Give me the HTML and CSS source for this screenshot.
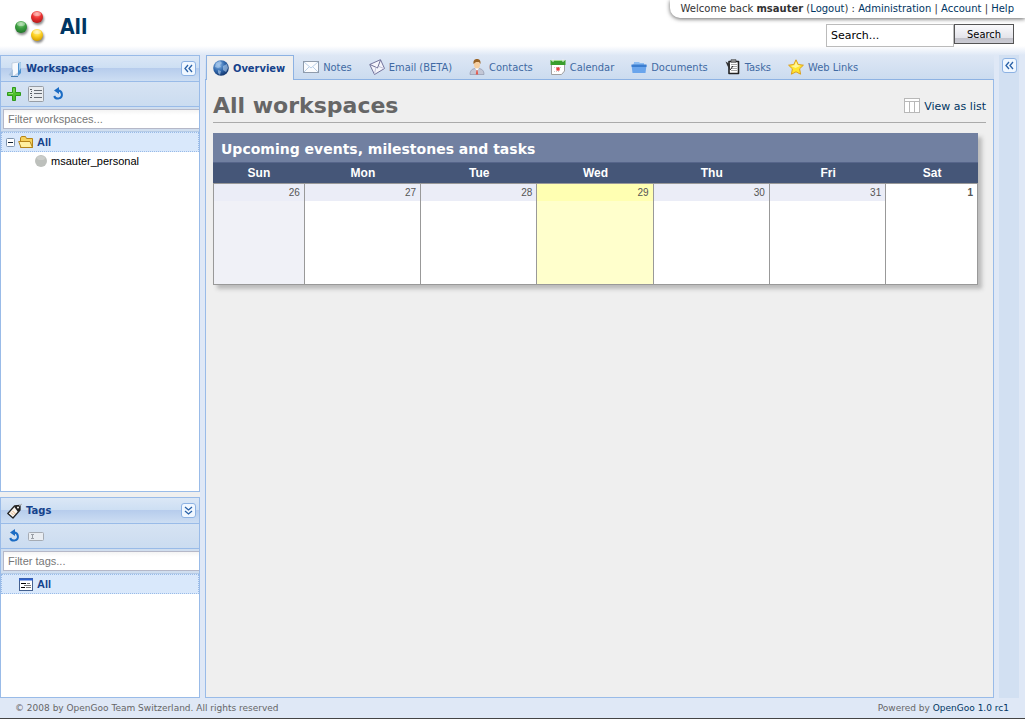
FILE: index.html
```
<!DOCTYPE html>
<html lang="en">
<head>
    <meta charset="utf-8">
    <title>All workspaces - OpenGoo</title>
    <link rel="stylesheet" href="styles.css">
</head>
<body>

<header class="header">
    <div class="brand">
        <svg class="logo" width="36" height="36" viewBox="0 0 36 36">
            <defs>
                <radialGradient id="red" cx=".5" cy=".25" r=".7"><stop offset="0" stop-color="#ff9a90"/><stop offset=".5" stop-color="#ee3434"/><stop offset="1" stop-color="#c01c1c"/></radialGradient>
                <radialGradient id="green" cx=".5" cy=".25" r=".7"><stop offset="0" stop-color="#9ad694"/><stop offset=".5" stop-color="#3fa142"/><stop offset="1" stop-color="#257d2d"/></radialGradient>
                <radialGradient id="yellow" cx=".5" cy=".25" r=".7"><stop offset="0" stop-color="#fff2a0"/><stop offset=".5" stop-color="#ffd528"/><stop offset="1" stop-color="#dba400"/></radialGradient>
                <filter id="soft"><feGaussianBlur stdDeviation="1.3"/></filter>
            </defs>
            <g fill="#888" filter="url(#soft)"><circle cx="8" cy="20" r="6"/><circle cx="24" cy="10" r="6"/><circle cx="24" cy="28" r="6"/></g>
            <circle cx="7" cy="18" r="6" fill="url(#green)"/>
            <circle cx="23" cy="8" r="6" fill="url(#red)"/>
            <circle cx="23" cy="26" r="6" fill="url(#yellow)"/>
            <g fill="#fff" opacity=".35"><ellipse cx="7" cy="15" rx="4" ry="2"/><ellipse cx="23" cy="5" rx="4" ry="2"/><ellipse cx="23" cy="23" rx="4" ry="2"/></g>
        </svg>
        <span class="brand-name">All</span>
    </div>
    <div class="header-right">
        <div class="userbox">
            Welcome back <b>msauter</b> (<a href="#">Logout</a>) : <a href="#">Administration</a> | <a href="#">Account</a> | <a href="#">Help</a>
        </div>
        <form class="search">
            <input class="search-text" type="text" value="Search..." aria-label="Search">
            <button class="search-btn" type="button">Search</button>
        </form>
    </div>
</header>

<div class="main">
    <aside class="sidebar">
        <section class="panel panel-workspaces">
            <div class="panel-head">
                <svg width="16" height="16" viewBox="0 0 16 16">
                    <path d="M5 2l7-1v10l-5 4H5z" fill="#f6f9fd" stroke="#b4c4d6" stroke-width=".7"/>
                    <path d="M11 2.500l3-1.500v11l-3 3z" fill="#4f93cf"/>
                    <path d="M12 2l2-1v6l-2 3z" fill="#a9cdea"/>
                    <path d="M1.500 14L6 8v7.500z" fill="#a8c2de"/>
                    <path d="M4 15.500h7" stroke="#4680b4"/>
                </svg>
                <h2 class="panel-title">Workspaces</h2>
                <button class="tool" type="button" aria-label="Collapse workspaces">
                    <svg width="11" height="11" viewBox="0 0 11 11"><path d="M5 2L2 5.500l3 3.500M9 2L6 5.500l3 3.500" fill="none" stroke="#2a62a8" stroke-width="1.300"/></svg>
                </button>
            </div>
            <div class="toolbar">
                <button class="icon-btn" type="button" aria-label="Add workspace">
                    <svg width="16" height="16" viewBox="0 0 16 16"><path d="M6.500 1.500h3v5h5v3h-5v5h-3v-5h-5v-3h5z" fill="#4fc02c" stroke="#2f9a1a" stroke-linejoin="round"/><path d="M8 2.500v4M2.500 7.500H7" stroke="#94e272"/></svg>
                </button>
                <button class="icon-btn" type="button" aria-label="List workspaces">
                    <svg width="16" height="16" viewBox="0 0 16 16"><rect x=".5" y=".5" width="15" height="15" rx="1" fill="#e9ecef" stroke="#979da5"/><path d="M6 4.500h8M6 7.500h8M6 11.500h8" stroke="#666c74"/><path d="M2 3.500h2M3 5.500h1M2 7.500h2M3 9.500h1M2 11.500h2" stroke="#555b63"/></svg>
                </button>
                <button class="icon-btn" type="button" aria-label="Refresh workspaces">
                    <svg width="16" height="16" viewBox="0 0 16 16"><path d="M8 4.500a4 4 0 1 1-3.800 5.500" fill="none" stroke="#1b6cc4" stroke-width="2"/><path d="M4 4.500L9 1v7z" fill="#1b6cc4"/></svg>
                </button>
            </div>
            <div class="filter">
                <input class="filter-text" type="text" placeholder="Filter workspaces..." aria-label="Filter workspaces">
            </div>
            <ul class="tree">
                <li class="node node-selected">
                    <button class="icon-btn expander" type="button" aria-label="Collapse All">
                        <svg width="9" height="9" viewBox="0 0 9 9"><rect x=".5" y=".5" width="8" height="8" rx="1" fill="#fff" stroke="#7d93ad"/><path d="M2 4.500h5" stroke="#123"/></svg>
                    </button>
                    <svg width="16" height="16" viewBox="0 0 16 16"><path d="M2.500 13.500V4l1-1.500h4l1 2h6v9z" fill="#f6d25c" stroke="#b5841a"/><path d="M.7 7.500h11.300l2.500 6H3z" fill="#fff0a0" stroke="#b5841a"/></svg>
                    <a href="#">All</a>
                </li>
                <li class="node node-child">
                    <svg width="14" height="14" viewBox="0 0 14 14"><circle cx="7" cy="7" r="6" fill="#bdc0bc"/><ellipse cx="7" cy="4" rx="4" ry="2" fill="#cbcdca"/></svg>
                    <a href="#">msauter_personal</a>
                </li>
            </ul>
        </section>

        <section class="panel panel-tags">
            <div class="panel-head">
                <svg width="16" height="16" viewBox="0 0 16 16"><path d="M.8 10.500L7.500 3l5.500-.5V7l-7 8z" fill="#faf5ee" stroke="#222" stroke-width="1.300" stroke-linejoin="round"/><path d="M7 3.500l6-1.500v5l-2 2z" fill="#222"/><path d="M5.500 8l3 3M4 9.500l2.500 2.500" stroke="#e8b07c"/><circle cx="11" cy="4.500" r="1" fill="#fff"/><path d="M12 3l3-2" stroke="#aaa"/></svg>
                <h2 class="panel-title">Tags</h2>
                <button class="tool" type="button" aria-label="Collapse tags">
                    <svg width="11" height="11" viewBox="0 0 11 11"><path d="M2 2l3.500 3L9 2M2 6l3.500 3L9 6" fill="none" stroke="#2a62a8" stroke-width="1.300"/></svg>
                </button>
            </div>
            <div class="toolbar">
                <button class="icon-btn" type="button" aria-label="Refresh tags">
                    <svg width="16" height="16" viewBox="0 0 16 16"><path d="M8 4.500a4 4 0 1 1-3.800 5.500" fill="none" stroke="#1b6cc4" stroke-width="2"/><path d="M4 4.500L9 1v7z" fill="#1b6cc4"/></svg>
                </button>
                <button class="icon-btn" type="button" aria-label="Rename tag">
                    <svg width="16" height="16" viewBox="0 0 16 16"><rect x=".5" y="4.500" width="15" height="8" rx="1" fill="#e9edf2" stroke="#a5abb3"/><path d="M3 6.500h3M3 10.500h3M4.500 6.500v4" stroke="#9a9fa6"/></svg>
                </button>
            </div>
            <div class="filter">
                <input class="filter-text" type="text" placeholder="Filter tags..." aria-label="Filter tags">
            </div>
            <ul class="tree">
                <li class="node node-selected node-tag">
                    <svg width="16" height="16" viewBox="0 0 16 16"><rect x="1.500" y="2.500" width="13" height="12" fill="#fff" stroke="#44608f"/><path d="M1 3.500h14" stroke="#2f62d0" stroke-width="2"/><path d="M3 7.500h5M3 11.500h4" stroke="#000"/><path d="M6 9.500h7M9 7.500h3M8 11.500h5" stroke="#777"/></svg>
                    <a href="#">All</a>
                </li>
            </ul>
        </section>
    </aside>

    <main class="center">
        <nav class="tabs">
            <a class="tab tab-active" href="#">
                <svg width="16" height="16" viewBox="0 0 16 16"><defs><radialGradient id="globe" cx=".35" cy=".3" r=".8"><stop offset="0" stop-color="#8dbbea"/><stop offset=".5" stop-color="#3269ad"/><stop offset="1" stop-color="#0d2c61"/></radialGradient></defs><circle cx="8" cy="8" r="7.800" fill="url(#globe)"/><path d="M3 3l4-2 2 2-2 2 1 2-3 1-3-1zM10 6l4-2 1 4-2 4-3-2zM5 10l3 1-1 4-2-2z" fill="#b4d0ee" opacity=".6"/></svg>
                Overview
            </a>
            <a class="tab" href="#">
                <svg width="16" height="16" viewBox="0 0 16 16"><rect x=".5" y="2.500" width="15" height="11" fill="#fbfcfe" stroke="#8f9bab"/><path d="M1 3l7 6 7-6M1 13l5-5M15 13l-5-5" fill="none" stroke="#b9cfe8"/></svg>
                Notes
            </a>
            <a class="tab" href="#">
                <svg width="16" height="16" viewBox="0 0 16 16"><path d="M.7 5.500L11.500.7l4 8.800-10 6z" fill="#f5f5fb" stroke="#74749c" stroke-linejoin="round"/><path d="M1 5.500l7.500 3.500 3-8" fill="none" stroke="#6e6e96"/><path d="M5.500 15l1.500-7M15 9.500L10 7.500" stroke="#c4c4dc"/></svg>
                Email (BETA)
            </a>
            <a class="tab" href="#">
                <svg width="16" height="16" viewBox="0 0 16 16"><path d="M1 15.500c0-4 2-5.500 5-6h4c3 .5 5 2 5 6z" fill="#c3c7d6" stroke="#8a8fa5" stroke-width=".6"/><path d="M6 9l2 3 2-3z" fill="#fff"/><path d="M7.500 11h1l.7 4.500H6.800z" fill="#e4584c"/><ellipse cx="8" cy="5.500" rx="3" ry="4" fill="#f6cfa0"/><path d="M4.500 5C4 1 6 0 8 0s4 1 3.500 5L10 3H7z" fill="#9a6426"/></svg>
                Contacts
            </a>
            <a class="tab" href="#">
                <svg width="16" height="16" viewBox="0 0 16 16"><path d="M1.500 4h13v8l-3 3.500h-10z" fill="#fff" stroke="#a0a0a0"/><path d="M.5 1h15v5H.5z" fill="#3a9e2c"/><path d="M1 1.500h14" stroke="#a4dd93"/><path d="M3 0v3M13 0v3" stroke="#eee"/><path d="M4 8.500h8M4 12.500h6" stroke="#ccc" stroke-dasharray="1 1"/><rect x="7" y="9" width="2" height="2" fill="#fff" stroke="#d00"/></svg>
                Calendar
            </a>
            <a class="tab" href="#">
                <svg width="16" height="16" viewBox="0 0 16 16"><path d="M3 4V3h5l1 1h4v2H2z" fill="#8cbcf2"/><path d="M.5 6h15l-1 8h-13z" fill="#6aa5ec"/><path d="M.5 5.500h15v2.500H.7z" fill="#3c7ed0"/></svg>
                Documents
            </a>
            <a class="tab" href="#">
                <svg width="16" height="16" viewBox="0 0 16 16"><path d="M4 2.500h9.500v12H4z" fill="#fff" stroke="#222" stroke-width="1.600" stroke-linejoin="round"/><path d="M6 .7h5v2.500H6z" fill="#999" stroke="#333" stroke-width=".6"/><path d="M6 5.500h6M6 7.500h6M6 9.500h6M6 11.500h6" stroke="#aaa"/><path d="M.5 2.500L5 5v6L2.500 7z" fill="#333"/><path d="M5 11l3-4" stroke="#222"/></svg>
                Tasks
            </a>
            <a class="tab" href="#">
                <svg width="16" height="16" viewBox="0 0 16 16"><path d="M8 .8l2.200 4.700 5.200.7-3.800 3.600 1 5.400L8 12.800l-4.600 2.400 1-5.400L.6 6.200l5.200-.7z" fill="#ffe62e" stroke="#dc9f20" stroke-linejoin="round"/><path d="M8 2.500L9.500 6l3 .7-5 2.300L3 7l3.500-.8z" fill="#fff69a"/></svg>
                Web Links
            </a>
        </nav>
        <div class="content">
            <div class="title-row">
                <h1 class="title">All workspaces</h1>
                <a class="view-link" href="#">
                    <svg width="16" height="16" viewBox="0 0 16 16"><rect x=".5" y=".5" width="15" height="14" fill="#fff" stroke="#b8b8b8"/><path d="M1 3.500h14M5.500 4v10M10.500 4v10" stroke="#b8b8b8"/></svg>
                    View as list
                </a>
            </div>
            <div class="calendar">
                <h2 class="calendar-title">Upcoming events, milestones and tasks</h2>
                <table class="week">
                    <colgroup>
                        <col class="col-weekend"><col><col><col><col><col><col class="col-weekend">
                    </colgroup>
                    <thead>
                        <tr><th>Sun</th><th>Mon</th><th>Tue</th><th>Wed</th><th>Thu</th><th>Fri</th><th>Sat</th></tr>
                    </thead>
                    <tbody>
                        <tr>
                            <td class="past-weekend"><div class="day">26</div></td>
                            <td><div class="day">27</div></td>
                            <td><div class="day">28</div></td>
                            <td class="today"><div class="day">29</div></td>
                            <td><div class="day">30</div></td>
                            <td><div class="day">31</div></td>
                            <td class="next-month"><div class="day">1</div></td>
                        </tr>
                    </tbody>
                </table>
            </div>
        </div>
    </main>

    <aside class="collapsed">
        <button class="tool" type="button" aria-label="Expand panel">
            <svg width="11" height="11" viewBox="0 0 11 11"><path d="M5 2L2 5.500l3 3.500M9 2L6 5.500l3 3.500" fill="none" stroke="#2a62a8" stroke-width="1.300"/></svg>
        </button>
    </aside>
</div>

<footer class="footer">
    <span>© 2008 by OpenGoo Team Switzerland. All rights reserved</span>
    <span>Powered by <a href="#">OpenGoo 1.0 rc1</a></span>
</footer>

</body>
</html>
```
FILE: styles.css
```
* {
    box-sizing: border-box;
}

body {
    margin: 0;
    height: 100vh;
    display: flex;
    flex-direction: column;
    background: #dfe8f6;
    border-bottom: 1px solid #444;
    font-family: Verdana, "DejaVu Sans", sans-serif;
    font-size: 10px;
    color: #333;
}

a {
    color: #003562;
    text-decoration: none;
}

h1, h2, ul {
    margin: 0;
    padding: 0;
}

svg {
    display: block;
    flex: none;
}

button {
    cursor: pointer;
}

/* header */
.header {
    display: flex;
    justify-content: space-between;
    height: 55px;
    flex: none;
    background: linear-gradient(#fff 46px, #dfe8f6);
}

.brand {
    display: flex;
    align-items: center;
    gap: 10px;
    height: 53px;
    padding-left: 14px;
}

.brand-name {
    font-family: Tahoma, "DejaVu Sans Condensed", sans-serif;
    font-size: 21px;
    font-weight: bold;
    color: #003562;
}

.header-right {
    display: flex;
    flex-direction: column;
    align-items: flex-end;
    gap: 6px;
}

.userbox {
    height: 18px;
    padding: 0 11px;
    line-height: 17px;
    background: #fff;
    border-radius: 0 0 0 10px;
    box-shadow: 0 1px 4px #666;
}

.search {
    display: flex;
    align-items: flex-start;
    padding-right: 11px;
}

.search-text {
    width: 128px;
    height: 23px;
    padding: 1px 4px;
    border: 1px solid #bbb;
    background: #fff;
    font-family: Verdana, "DejaVu Sans", sans-serif;
    font-size: 11px;
    color: #000;
}

.search-btn {
    width: 60px;
    height: 20px;
    padding: 0;
    border: 1px solid #555;
    background: linear-gradient(#fafafc, #e4e4ea 70%, #c2c2ca 70%, #ccccd4);
    font-family: Tahoma, "DejaVu Sans Condensed", sans-serif;
    font-size: 11px;
    color: #000;
}

/* page columns */
.main {
    display: flex;
    gap: 5px;
    flex: 1;
    min-height: 0;
    padding-right: 6px;
}

.sidebar {
    display: flex;
    flex-direction: column;
    gap: 5px;
    width: 200px;
    flex: none;
    background: #efefef;
}

.panel {
    display: flex;
    flex-direction: column;
    background: #fff;
    border: 1px solid #99bbe8;
    font-family: "Liberation Sans", Arial, sans-serif;
    overflow: hidden;
}

.panel-workspaces {
    flex: 1;
}

.panel-tags {
    flex: 0 0 201px;
}

.panel-head {
    display: flex;
    align-items: center;
    gap: 3px;
    height: 26px;
    flex: none;
    padding: 0 3px 0 6px;
    border-bottom: 1px solid #99bbe8;
    background: linear-gradient(#dbe7f6, #cddff3 12px, #b6ccec 12px, #cddef3);
}

.panel-title {
    flex: 1;
    font-family: Verdana, "DejaVu Sans", sans-serif;
    font-size: 10px;
    line-height: 14px;
    color: #15428b;
}

.tool {
    display: flex;
    align-items: center;
    justify-content: center;
    width: 15px;
    height: 15px;
    padding: 0;
    border: 1px solid #8db2e3;
    border-radius: 3px;
    background: #f0f7ff;
}

.toolbar {
    display: flex;
    align-items: center;
    gap: 6px;
    height: 25px;
    flex: none;
    padding-left: 5px;
    border-bottom: 1px solid #99bbe8;
    background: linear-gradient(#d6e3f3, #cbdcf0);
}

.icon-btn {
    padding: 0;
    border: 0;
    background: none;
}

.filter {
    height: 25px;
    flex: none;
    padding: 2px 0 0 2px;
    border-bottom: 1px solid #b5cbe6;
    background: #d0deef;
}

.filter-text {
    width: 100%;
    height: 20px;
    padding: 0 4px;
    border: 1px solid #b5b8c8;
    border-right: 0;
    background: linear-gradient(#f4f4f4, #fff 5px);
    font-family: "Liberation Sans", Arial, sans-serif;
    font-size: 11px;
}

.filter-text::placeholder {
    color: #777;
}

.tree {
    list-style: none;
    font-size: 11px;
}

.node {
    display: flex;
    align-items: center;
    gap: 3px;
    height: 17px;
}

.node a {
    color: #000;
}

.node-selected {
    height: 20px;
    padding-left: 4px;
    border: 1px dotted #99bbe8;
    background: #d9e8fb;
}

.node-selected a {
    font-weight: bold;
    color: #15428b;
}

.node-child {
    padding-left: 33px;
}

.node-tag {
    padding-left: 16px;
}

/* tabs */
.center {
    display: flex;
    flex-direction: column;
    flex: 1;
    min-width: 0;
}

.tabs {
    display: flex;
    align-items: flex-end;
    gap: 1px;
    height: 25px;
    flex: none;
    padding-left: 1px;
    border-bottom: 1px solid #8db2e3;
    background: linear-gradient(#dee7f5, #cbdbef);
}

.tab {
    display: flex;
    align-items: center;
    gap: 4px;
    height: 24px;
    padding: 0 8px;
    font-family: Tahoma, "DejaVu Sans Condensed", sans-serif;
    font-size: 11px;
    color: #416aa3;
    white-space: nowrap;
}

.tab-active {
    height: 25px;
    margin-bottom: -1px;
    padding: 0 8px 0 6px;
    border: 1px solid #8db2e3;
    border-bottom: 0;
    background: #efefef;
    font-weight: bold;
    color: #15428b;
}

.content {
    flex: 1;
    padding: 10px 7px;
    border: 1px solid #99bbe8;
    border-top: 0;
    background: #efefef;
}

.title-row {
    display: flex;
    align-items: center;
    justify-content: space-between;
    height: 33px;
    border-bottom: 1px solid #aaa;
}

.title {
    font-size: 22px;
    line-height: 30px;
    color: #666;
}

.view-link {
    display: flex;
    align-items: center;
    gap: 4px;
    font-size: 11px;
}

/* calendar */
.calendar {
    margin: 10px 8px 0 0;
    box-shadow: 4px 4px 4px #bbb;
}

.calendar-title {
    height: 29px;
    padding: 0 8px;
    line-height: 32px;
    background: #7180a1;
    font-size: 14px;
    color: #fff;
}

.week {
    width: 100%;
    table-layout: fixed;
    border-collapse: separate;
    border-spacing: 0;
    font-family: "Liberation Sans", Arial, sans-serif;
}

.col-weekend {
    width: 12%;
}

.week th {
    height: 21px;
    padding: 0;
    border-top: 1px solid #56658a;
    background: #455678;
    font-size: 12px;
    color: #fff;
}

.week td {
    height: 102px;
    padding: 0;
    border: 1px solid #999;
    border-left: 0;
    background: #fff;
    vertical-align: top;
}

.day {
    height: 17px;
    padding-right: 4px;
    line-height: 17px;
    text-align: right;
    background: #ebedf7;
    color: #555;
}

.week .past-weekend {
    border-left: 1px solid #999;
    background: #f0f1f7;
}

.week .today {
    background: #ffffcc;
}

.today .day {
    background: #ffffb2;
}

.next-month .day {
    background: #fff;
    font-weight: bold;
}

/* right collapsed panel */
.collapsed {
    display: flex;
    justify-content: center;
    align-items: flex-start;
    width: 20px;
    flex: none;
    padding-top: 3px;
    background: #d2e0f2;
}

.footer {
    display: flex;
    align-items: center;
    justify-content: space-between;
    height: 20px;
    flex: none;
    padding: 0 16px 0 15px;
    font-size: 9px;
    color: #666;
}
```
